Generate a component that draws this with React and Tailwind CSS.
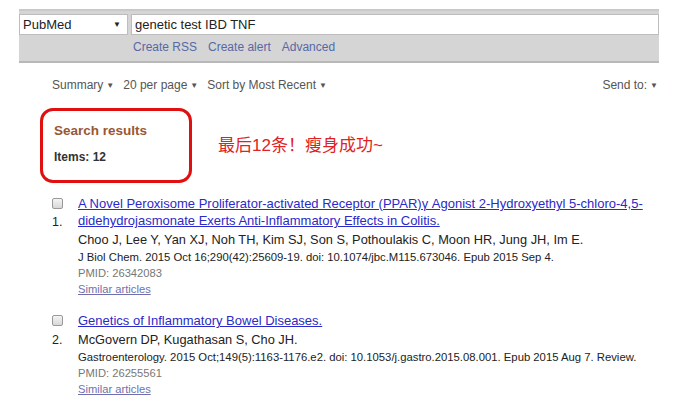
import React from 'react';

const Caret = () => <span className="ml-[3px] text-[8px] align-middle">▼</span>;

const results = [
  {
    n: '1.',
    title: 'A Novel Peroxisome Proliferator-activated Receptor (PPAR)γ Agonist 2-Hydroxyethyl 5-chloro-4,5-didehydrojasmonate Exerts Anti-Inflammatory Effects in Colitis.',
    authors: 'Choo J, Lee Y, Yan XJ, Noh TH, Kim SJ, Son S, Pothoulakis C, Moon HR, Jung JH, Im E.',
    journal: 'J Biol Chem. 2015 Oct 16;290(42):25609-19. doi: 10.1074/jbc.M115.673046. Epub 2015 Sep 4.',
    pmid: '26342083',
  },
  {
    n: '2.',
    title: 'Genetics of Inflammatory Bowel Diseases.',
    authors: 'McGovern DP, Kugathasan S, Cho JH.',
    journal: 'Gastroenterology. 2015 Oct;149(5):1163-1176.e2. doi: 10.1053/j.gastro.2015.08.001. Epub 2015 Aug 7. Review.',
    pmid: '26255561',
  },
];

export default function App() {
  return (
    <div className="w-[687px] h-[402px] overflow-hidden bg-white pt-[9px] font-['Liberation_Sans',Arial,sans-serif] text-[#222]">
      {/* Search bar */}
      <div className="ml-[19px] w-[640px] bg-[#d5d5d5] border-t-[2px] border-[#c9c9c9] border-b-[2px] border-b-[#b8b8b8]">
        <div className="flex pt-[3px]">
          <div className="w-[109px] h-[21px] bg-white border border-[#bdbdbd] flex items-center justify-between pl-[3px] pr-[6px] text-[13px]">
            <span>PubMed</span>
            <span className="text-[8px]">▼</span>
          </div>
          <div className="flex-1 ml-[3px] h-[21px] bg-white border border-[#bdbdbd] flex items-center pl-[3px] text-[13px]">
            genetic test IBD TNF
          </div>
        </div>
        <div className="flex gap-[11px] pl-[114px] h-[26px] pt-[3px] text-[12px] text-[#5868a4]">
          <span>Create RSS</span>
          <span>Create alert</span>
          <span>Advanced</span>
        </div>
      </div>

      {/* Display settings */}
      <div className="flex justify-between ml-[52px] w-[606px] mt-[13px] text-[12px] text-[#555]">
        <div className="flex gap-[9px]">
          <span>Summary<Caret /></span>
          <span>20 per page<Caret /></span>
          <span>Sort by Most Recent<Caret /></span>
        </div>
        <span>Send to:<Caret /></span>
      </div>

      {/* Result count */}
      <div className="flex items-center mt-[14px] ml-[40px]">
        <div className="w-[152px] h-[75px] border-[3px] border-[#e01010] rounded-[13px] pl-[11px] pt-[10px]">
          <div className="text-[13.5px] font-bold text-[#985735]">Search results</div>
          <div className="mt-[7px] text-[12px] font-bold text-[#333]">Items: 12</div>
        </div>
        <div className="ml-[26px] text-[17px] text-[#e02222] font-['Liberation_Sans','Noto_Sans_CJK_SC',sans-serif]">
          最后12条！瘦身成功~
        </div>
      </div>

      {/* Results */}
      <div className="mt-[12px] ml-[52px] flex flex-col gap-[15px]">
        {results.map((r) => (
          <div key={r.pmid} className="flex">
            <div className="w-[26px] flex flex-col">
              <div className="w-[11px] h-[11px] mt-[3px] border border-[#999] rounded-[2px] bg-gradient-to-b from-[#f4f4f4] to-[#d8d8d8]" />
              <div className={`text-[12.5px] ${r.n === '1.' ? 'mt-[4px]' : 'mt-[5px]'}`}>{r.n}</div>
            </div>
            <div className="w-[590px]">
              <a className="block text-[13px] leading-[17px] text-[#2a2ac8] underline">{r.title}</a>
              <div className="mt-[2px] text-[12.8px] leading-[18px] text-[#222]">{r.authors}</div>
              <div className="text-[11.3px] leading-[16px] text-[#222]">{r.journal}</div>
              <div className="text-[11.2px] leading-[16px] text-[#777]">PMID: {r.pmid}</div>
              <a className="block text-[11.2px] leading-[16px] text-[#6f6fae] underline">Similar articles</a>
            </div>
          </div>
        ))}
      </div>
    </div>
  );
}
